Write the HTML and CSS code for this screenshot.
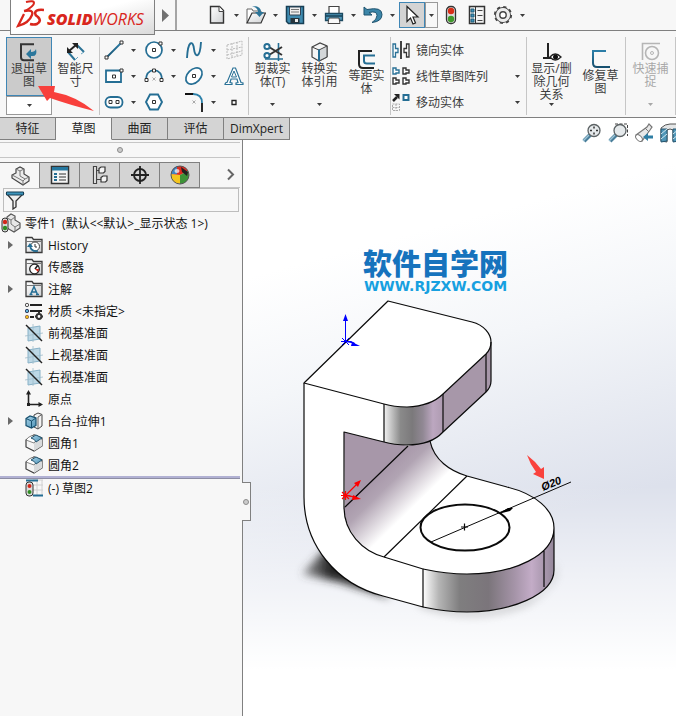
FILE: index.html
```html
<!DOCTYPE html>
<html lang="zh-CN">
<head>
<meta charset="utf-8">
<title>SOLIDWORKS</title>
<link rel="stylesheet" href="styles.css">
</head>
<body>
<svg class="defs" aria-hidden="true">
  <defs>
    <linearGradient id="steel" x1="0" y1="0" x2="0" y2="1"><stop offset="0" stop-color="#2b7ea8"/><stop offset="1" stop-color="#17506f"/></linearGradient>
    <linearGradient id="glass" x1="0" y1="0" x2="1" y2="1"><stop offset="0" stop-color="#a9d3e8"/><stop offset="1" stop-color="#4d93b7"/></linearGradient>
    <linearGradient id="paper" x1="0" y1="0" x2="1" y2="1"><stop offset="0" stop-color="#fff"/><stop offset="1" stop-color="#cfd1d3"/></linearGradient>
    <symbol id="caret" viewBox="0 0 5 3"><path d="M0 0h5L2.500 3z" fill="currentColor"/></symbol>
    <symbol id="expand" viewBox="0 0 5 8"><path d="M0 0l5 4-5 4z" fill="#6a6a6a"/></symbol>
    <symbol id="folder" viewBox="0 0 18 18"><path d="M1 16.500V1.500h6l1.500 2H17v13z" fill="url(#paper)" stroke="#3b3b3b" stroke-width="1.300"/><path d="M1 5.500h16" stroke="#777"/></symbol>
    <symbol id="plane" viewBox="0 0 18 18"><path d="M3 4l12-2v13L3 17z" fill="#bcd7e5" stroke="#88b2c8"/><path d="M8 0v18M0 12l18-3" stroke="#9fbccb" stroke-width=".8"/><path d="M1 1l16 16" stroke="#222" stroke-width="1.500"/></symbol>
    <symbol id="fillet" viewBox="0 0 18 18"><path d="M1 6l8-5 8 3v8l-8 5-8-4z" fill="#f4f4f4" stroke="#3f3f3f" stroke-width="1.200"/><path d="M9 8.500V17l8-5V5.500z" fill="#d8dadb"/><path d="M1 6Q3 3 6 2l4-1 7 3q-4 0-6 2.500L9 9z" fill="#fff" stroke="#555" stroke-width=".7"/><path d="M6 4l5-3 6 3-6 4q-1-3-5-4z" fill="url(#glass)" stroke="#24556f"/></symbol>
    <symbol id="lens" viewBox="0 0 20 20"><path d="M8 12l-6 6" stroke="#4a7f9b" stroke-width="4"/><path d="M7 12l-6 6" stroke="#9fc5d7" stroke-width="1.500"/><circle cx="12" cy="7.500" r="6" fill="#e5e9eb" stroke="#5c6264" stroke-width="1.300"/></symbol>
  </defs>
</svg>

<header class="topbar">
  <div class="brand">
    <svg class="ds" viewBox="0 0 28 28" fill="none" stroke="#d9261c"><path d="M10 2q8-2 8 1 0 3-9 8" stroke-width="2"/><path d="M8 11q10-2 8 4-3 8-14 11l6-12" stroke-width="2.300"/><path d="M28 10q-8-1-9 3 0 2 3 4 4 4-1 7-3 1-7 0" stroke-width="2.600"/></svg>
    <span class="wordmark"><b>SOLID</b>WORKS</span>
  </div>
  <button class="menu-toggle" aria-label="菜单"><svg width="7" height="13" viewBox="0 0 7 13"><path d="M0 0l7 6.500L0 13z" fill="#717171"/></svg></button>
  <div class="quick">
    <button class="tool" aria-label="新建"><svg viewBox="0 0 20 20"><path d="M3.500 1.500h9l4 4V18h-13z" fill="url(#paper)" stroke="#333" stroke-width="1.400"/><path d="M12 1.500v5h4.500" fill="#fff" stroke="#444"/></svg></button>
    <button class="drop" aria-label="新建选项"><svg><use href="#caret"/></svg></button>
    <button class="tool" aria-label="打开"><svg viewBox="0 0 20 20"><path d="M1 18V4h5l1 2h8v5" fill="#fff" stroke="#666"/><path d="M1 18L6 8h13.500L15 18z" fill="url(#paper)" stroke="#333" stroke-width="1.200"/><path d="M6 1q9 0 9 6h3l-4.500 5L9 7h3q0-4-6-6z" fill="#2d7598"/></svg></button>
    <button class="drop" aria-label="打开选项"><svg><use href="#caret"/></svg></button>
    <button class="tool" aria-label="保存"><svg viewBox="0 0 20 20"><path d="M1.500 1.500h17v17h-15l-2-2z" fill="#3f8bb0" stroke="#173f55" stroke-width="1.500"/><path d="M4.500 2h11v8h-11z" fill="#eee" stroke="#345"/><path d="M6 4.500h8M6 7h8" stroke="#777"/><path d="M5.500 13h9v5h-9z" fill="#26343c"/><path d="M10 14h3v3h-3z" fill="#eee"/></svg></button>
    <button class="drop" aria-label="保存选项"><svg><use href="#caret"/></svg></button>
    <button class="tool" aria-label="打印"><svg viewBox="0 0 20 20"><path d="M5 9V1.500h10V9" fill="#fff" stroke="#444" stroke-width="1.200"/><path d="M1.500 8.500h17v7h-17z" fill="#4d96b9" stroke="#1c4a61" stroke-width="1.300"/><path d="M2 11h16" stroke="#173f55" stroke-width="1.500"/><path d="M5 13h10l1 5.500H4z" fill="#f8f8f8" stroke="#444"/></svg></button>
    <button class="drop" aria-label="打印选项"><svg><use href="#caret"/></svg></button>
    <button class="tool" aria-label="撤销"><svg viewBox="0 0 20 20"><path d="M1 2v8h8L6 7.500q8-2 8 3 0 4-5 7 10-1 10-8 0-8-15-5z" fill="#3c86a9" stroke="#1d526e"/></svg></button>
    <button class="drop" aria-label="撤销选项"><svg><use href="#caret"/></svg></button>
    <button class="tool tool-on" aria-label="选择"><svg viewBox="0 0 20 20"><path d="M5 1.500v15l3.500-3.500 2.500 6 2.500-1-2.500-6h5z" fill="#fff" stroke="#222" stroke-width="1.200"/></svg></button>
    <button class="drop drop-on" aria-label="选择选项"><svg><use href="#caret"/></svg></button>
    <button class="tool" aria-label="重建模型"><svg viewBox="0 0 20 20"><rect x="5.500" y="1.500" width="9" height="17" rx="4" fill="#ddd" stroke="#333" stroke-width="1.300"/><circle cx="10" cy="6" r="3.200" fill="#d82e18"/><circle cx="10" cy="14" r="3.200" fill="#3f9a2b"/></svg></button>
    <button class="tool" aria-label="文件属性"><svg viewBox="0 0 20 20"><path d="M2.500 1.500h15v17h-15z" fill="#f3f3f3" stroke="#333" stroke-width="1.500"/><path d="M8.500 2v16" stroke="#333"/><path d="M4 4h3v3H4zM4 9h3v3H4zM4 14h3v3H4z" fill="#3e93ba" stroke="#215a76"/><path d="M10.500 5.500h5M10.500 10.500h5M10.500 15.500h5" stroke="#444"/></svg></button>
    <button class="tool" aria-label="选项"><svg viewBox="0 0 20 20"><circle cx="10" cy="10" r="7.300" fill="#ececec" stroke="#444" stroke-width="1.300"/><circle cx="10" cy="10" r="8.200" fill="none" stroke="#444" stroke-width="1.800" stroke-dasharray="3.200 3.240"/><circle cx="10" cy="10" r="7" fill="#ececec"/><circle cx="10" cy="10" r="3.200" fill="#fff" stroke="#444" stroke-width="1.400"/></svg></button>
    <button class="drop" aria-label="选项列表"><svg><use href="#caret"/></svg></button>
  </div>
</header>

<section class="ribbon" aria-label="草图工具">
  <div class="group">
    <div class="split">
      <button class="big big-on"><svg viewBox="0 0 20 20"><path d="M15 2.200H2v13q0 3 3 3h10" fill="none" stroke="#333" stroke-width="2"/><path d="M7 12l5-5v3q4 0 5-3 2 8-5 7v3z" fill="#2b779c"/></svg><span>退出草<br>图</span></button>
      <button class="split-drop" aria-label="退出草图选项"><svg class="caret"><use href="#caret"/></svg></button>
    </div>
    <button class="big"><svg viewBox="0 0 20 20"><path d="M2 10l7 8M10 2l8 8" stroke="#2a7195" stroke-width="2"/><path d="M3 9L10 3" stroke="#222" stroke-width="2"/><path d="M1 5v6h6zM6 1h6v6z" fill="#222"/><path d="M9 18l3-3M15 12l3-2" stroke="#6ba5c0"/></svg><span>智能尺<br>寸</span><svg class="caret"><use href="#caret"/></svg></button>
  </div>
  <div class="sketch-grid">
    <div class="cell"><button class="tool" aria-label="直线"><svg viewBox="0 0 20 20"><path d="M2.500 17.500L17.500 2.500" stroke="url(#steel)" stroke-width="1.800"/><path d="M1 16h3v3H1zM16 1h3v3h-3z" fill="#fff" stroke="#333"/></svg></button><button class="drop" aria-label="直线选项"><svg><use href="#caret"/></svg></button></div>
    <div class="cell"><button class="tool" aria-label="圆"><svg viewBox="0 0 20 20"><circle cx="10" cy="10" r="8" fill="#fff" stroke="#256e94" stroke-width="1.700"/><path d="M8.500 8.500h3v3h-3zM15 2h3v3h-3z" fill="#fff" stroke="#333"/></svg></button><button class="drop" aria-label="圆选项"><svg><use href="#caret"/></svg></button></div>
    <div class="cell"><button class="tool" aria-label="样条曲线"><svg viewBox="0 0 20 20"><path d="M3 18C4 0 9 0 10 9s6 10 7-7" fill="none" stroke="#256e94" stroke-width="1.900"/></svg></button><button class="drop" aria-label="样条曲线选项"><svg><use href="#caret"/></svg></button></div>
    <button class="tool" disabled aria-label="曲面上的样条"><svg viewBox="0 0 20 20"><path d="M3 5l15-4v14L3 19zM8 3v14M13 2v14M3 10l15-3M3 15l15-4" fill="none" stroke="#bbb" stroke-dasharray="2 1"/></svg></button>
    <div class="cell"><button class="tool" aria-label="矩形"><svg viewBox="0 0 20 20"><path d="M2 4.500h15V16H2z" fill="#fff" stroke="#256e94" stroke-width="1.800"/><path d="M8.500 9h3v3h-3zM16 3h3v3h-3z" fill="#fff" stroke="#333"/></svg></button><button class="drop" aria-label="矩形选项"><svg><use href="#caret"/></svg></button></div>
    <div class="cell"><button class="tool" aria-label="圆弧"><svg viewBox="0 0 20 20"><path d="M2 14q0-9 8-10 8 1 8 10" fill="none" stroke="#256e94" stroke-width="1.700"/><path d="M1 12.500h3v3H1zM16 12.500h3v3h-3zM8.500 3h3v3h-3z" fill="#fff" stroke="#333"/><path d="M8.500 11.500l3 3m0-3l-3 3" stroke="#aaa"/></svg></button><button class="drop" aria-label="圆弧选项"><svg><use href="#caret"/></svg></button></div>
    <div class="cell"><button class="tool" aria-label="椭圆"><svg viewBox="0 0 20 20"><ellipse cx="10" cy="10" rx="9.500" ry="6.500" transform="rotate(-45 10 10)" fill="#fff" stroke="#256e94" stroke-width="1.700"/><path d="M8.500 8.500h3v3h-3z" fill="#fff" stroke="#333"/></svg></button><button class="drop" aria-label="椭圆选项"><svg><use href="#caret"/></svg></button></div>
    <button class="tool" aria-label="文字"><svg viewBox="0 0 20 20"><path d="M1 18l1-1.500h1L9 2h2.500L17 16.500l2 .5v1.500h-7V17l2-.5-1-3.500H7l-1 3.500 2 .5v1.500H1z" fill="#fff" stroke="#2b7297" stroke-width="1.200"/><path d="M7.500 11h5L10 5z" fill="#f7f7f7" stroke="#2b7297"/></svg></button>
    <div class="cell"><button class="tool" aria-label="槽口"><svg viewBox="0 0 20 20"><rect x="1.500" y="5" width="17" height="10.500" rx="5" fill="#fff" stroke="#256e94" stroke-width="1.800"/><path d="M5 8.500h3v3H5zM12 8.500h3v3h-3z" fill="#fff" stroke="#333"/></svg></button><button class="drop" aria-label="槽口选项"><svg><use href="#caret"/></svg></button></div>
    <div class="cell"><button class="tool" aria-label="多边形"><svg viewBox="0 0 20 20"><path d="M6 2.500h8l4 7.500-4 7.500H6L2 10z" fill="#fff" stroke="#256e94" stroke-width="1.900"/><path d="M8.500 8.500h3v3h-3z" fill="#fff" stroke="#333"/></svg></button></div>
    <div class="cell"><button class="tool" aria-label="圆角"><svg viewBox="0 0 20 20"><path d="M1 2h9M18 11v9" stroke="#111" stroke-width="1.800"/><path d="M9 2q9 0 9 9" fill="none" stroke="#2c80a9" stroke-width="1.800"/><path d="M8.500 8.500l3 3m0-3l-3 3" stroke="#aaa"/></svg></button><button class="drop" aria-label="圆角选项"><svg><use href="#caret"/></svg></button></div>
    <button class="tool" aria-label="点"><svg viewBox="0 0 20 20"><path d="M8 8.500h4v4H8z" fill="#fff" stroke="#222" stroke-width="1.300"/></svg></button>
  </div>
  <div class="group">
    <button class="big"><svg viewBox="0 0 20 20"><path d="M15.500 1v18M2 17h18" stroke="#256e94" stroke-width="1.600"/><path d="M6 5l13 8M6 13l13-8" stroke="#333" stroke-width="2"/><circle cx="4" cy="4.500" r="2.600" fill="#fff" stroke="#256e94" stroke-width="2"/><circle cx="4" cy="13.500" r="2.600" fill="#fff" stroke="#256e94" stroke-width="2"/></svg><span>剪裁实<br>体(T)</span><svg class="caret"><use href="#caret"/></svg></button>
    <button class="big"><svg viewBox="0 0 20 20"><path d="M2 5l8-4 7 3v11l-8 4-7-4z" fill="#f6f6f6" stroke="#444" stroke-width="1.200"/><path d="M9 8l8-4v11l-8 4z" fill="#d4d7d9" stroke="#444"/><path d="M2 5l7 3" stroke="#444"/><path d="M9 7.500V19" stroke="#256e94" stroke-width="2"/></svg><span>转换实<br>体引用</span><svg class="caret"><use href="#caret"/></svg></button>
    <button class="big big-mid"><svg viewBox="0 0 20 20"><path d="M15 2H2v13q0 4 4 4h11" fill="none" stroke="#222" stroke-width="2"/><path d="M18 6.500H7V12q0 2.500 3 2.500h8" fill="none" stroke="#256e94" stroke-width="2"/></svg><span>等距实<br>体</span></button>
  </div>
  <div class="list">
    <button class="row"><svg viewBox="0 0 20 20"><path d="M10 1v18" stroke="#222" stroke-width="1.700"/><path d="M2 4h2.500v4.500H7v4H4.500V17H2z" fill="#fff" stroke="#2b7297" stroke-width="1.300"/><path d="M18 4h-2.500v4.500H13v4h2.500V17H18z" fill="#fff" stroke="#333" stroke-width="1.300"/></svg><span>镜向实体</span></button>
    <button class="row"><svg viewBox="0 0 20 20"><path d="M2 2h3v2h3v3H5v1H2z" fill="#fff" stroke="#2b7297" stroke-width="1.400"/><path d="M12 2h3v2h3v3h-3v1h-3zM2 12h3v2h3v3H5v1H2zM12 12h3v2h3v3h-3v1h-3z" fill="#fff" stroke="#333" stroke-width="1.400"/></svg><span>线性草图阵列</span><svg class="caret"><use href="#caret"/></svg></button>
    <button class="row"><svg viewBox="0 0 20 20"><path d="M12.500 3h5v5h-5z" fill="#fff" stroke="#256e94" stroke-width="2"/><path d="M2 9l4-4" stroke="#222" stroke-width="2.500"/><path d="M3 2h5.500v5.500z" fill="#222"/><path d="M1.500 12h7v6.500h-7zM5 12v7M1.500 15.500h7" fill="none" stroke="#aaa" stroke-dasharray="2 1"/></svg><span>移动实体</span><svg class="caret"><use href="#caret"/></svg></button>
  </div>
  <div class="group">
    <button class="big"><svg viewBox="0 0 20 20"><path d="M6 1v15M1 16h8" stroke="#222" stroke-width="2"/><path d="M8 15q5-6 11 0-6 6-11 0z" fill="#fff" stroke="#222" stroke-width="1.300"/><circle cx="13.500" cy="15" r="2.500" fill="#111"/></svg><span>显示/删<br>除几何<br>关系</span><svg class="caret"><use href="#caret"/></svg></button>
    <button class="big big-mid"><svg viewBox="0 0 20 20"><path d="M15 2H2v12q0 4 4 4h13" fill="none" stroke="url(#steel)" stroke-width="2"/></svg><span>修复草<br>图</span></button>
  </div>
  <div class="group">
    <button class="big" disabled><svg viewBox="0 0 20 20"><path d="M1.500 18V1.500H19" fill="none" stroke="#b5b5b5" stroke-width="1.600"/><circle cx="11" cy="11" r="6.500" fill="none" stroke="#b5b5b5" stroke-width="1.600"/><circle cx="11" cy="11" r="1.500" fill="none" stroke="#b5b5b5"/></svg><span>快速捕<br>捉</span><svg class="caret"><use href="#caret"/></svg></button>
  </div>
  <svg class="pointer" viewBox="0 0 56 26" aria-hidden="true"><path d="M0 0L17 0 16 6Q38 10 56 25 32 19 12 12L9 15z" fill="#f8403c"/></svg>
</section>

<div class="tabbar">
  <nav class="tabs">
    <a href="#features">特征</a><a href="#sketch" class="current">草图</a><a href="#surfaces">曲面</a><a href="#evaluate">评估</a><a href="#dimxpert" class="wide">DimXpert</a>
  </nav>
  <div class="view-tools">
    <button aria-label="整屏显示全图"><svg viewBox="0 0 20 20"><use href="#lens"/><path d="M12 3.500v2M12 9.500v2M8 7.500h2M14 7.500h2" stroke="#333" stroke-width="1.500"/></svg></button>
    <button aria-label="局部放大"><svg viewBox="0 0 20 20"><path d="M7 1h12.500v12" fill="none" stroke="#444" stroke-dasharray="3 1.500"/><use href="#lens"/></svg></button>
    <button aria-label="上一视图"><svg viewBox="0 0 20 20"><path d="M2 12L13 4l2-3 3 3-2 3L8 18z" fill="#e8e8e8" stroke="#777" stroke-width="1.200"/><path d="M11 5l4 4" stroke="#777"/><ellipse cx="5" cy="15" rx="4" ry="2.500" transform="rotate(45 5 15)" fill="#fff" stroke="#777"/><path d="M9 14l5-4v2.500h5v3h-5V18z" fill="#2f7ea4"/></svg></button>
    <button aria-label="剖面视图"><svg viewBox="0 0 20 20"><path d="M1 5q4-4 9-4h9v17h-6V7q-3-2-6 0v12l-6-1z" fill="#e4e6e7" stroke="#555"/><path d="M1 6h6v12l-6 1zM13 6h6v12l-6 1z" fill="#5097b8" stroke="#24556f"/><path d="M1 11l6-5M1 16l6-5M13 11l6-5M13 16l6-5" stroke="#d4e8f1"/></svg></button>
  </div>
</div>

<main class="workspace">
  <aside class="panel">
    <div class="splitter"><i class="knob"></i></div>
    <div class="panel-tabs">
      <button class="current" aria-label="特征树"><svg viewBox="0 0 20 20"><path d="M2 9l4-2V3l4-2 4 2v5l5 3v4l-6 4L2 12z" fill="#ececec" stroke="#444" stroke-width="1.200"/><path d="M6 3l4 2v5l5 3 4-2M10 5l4-2M2 9l4 2 7 4v4M13 15l2-2" fill="none" stroke="#777"/></svg></button>
      <button aria-label="属性"><svg viewBox="0 0 20 20"><path d="M1.500 1.500h17v17h-17z" fill="#f5f5f5" stroke="#333" stroke-width="1.500"/><path d="M2 2h16v3.500H2z" fill="#2678a0"/><path d="M4 9h3M4 12h3M4 15h3" stroke="#256e94" stroke-width="2"/><path d="M9 9h7M9 12h7M9 15h7" stroke="#333" stroke-width="1.200"/></svg></button>
      <button aria-label="配置"><svg viewBox="0 0 20 20"><path d="M3.500 1.500h3v17h-3zM6.500 5.500h4M6.500 14.500h5" fill="#eee" stroke="#444" stroke-width="1.200"/><path d="M9 3.500L11 2h4v4.500L13.500 8H9zM11 12.500l2-1.500h4v4.500L15.500 17H11z" fill="#f5f5f5" stroke="#333" stroke-width="1.200"/></svg></button>
      <button aria-label="尺寸专家"><svg viewBox="0 0 20 20"><circle cx="10" cy="10" r="6" fill="none" stroke="#222" stroke-width="1.800"/><path d="M10 1v18M1 10h18" stroke="#222" stroke-width="1.800"/></svg></button>
      <button aria-label="外观"><svg viewBox="0 0 20 20"><path d="M10 10V1a9 9 0 0 1 8 5z" fill="#e12a20"/><path d="M1 9l9 1v9a9 9 0 0 1-9-10z" fill="#f4c51f"/><path d="M10 10l8-4a9 9 0 0 1-8 13z" fill="#3d9338"/><path d="M1 9a9 9 0 0 1 9-8v9z" fill="#d83124"/><path d="M1 9q1-6 6-8v8z" fill="#4384c1"/><path d="M11 2l7 5-1 4-5-4z" fill="#222"/><circle cx="10" cy="10" r="9" fill="none" stroke="#555"/><ellipse cx="7" cy="6" rx="2.500" ry="2" fill="#fff" opacity=".7"/></svg></button>
      <button class="more" aria-label="更多"><svg viewBox="0 0 20 20"><path d="M8 4.500l5 5-5 5" fill="none" stroke="#666" stroke-width="2"/></svg></button>
    </div>
    <label class="filter"><svg viewBox="0 0 20 20"><path d="M2 4l6 7v8l3-2v-6l7-7z" fill="#eee" stroke="#333" stroke-width="1.300"/><path d="M1.500 2h17v3h-17z" fill="#3c94bb" stroke="#173f55"/></svg><input type="text" aria-label="过滤特征树"></label>
    <div class="tree-root"><svg viewBox="0 0 20 20"><path d="M6 7V4l4-3 4 2v4l5 3v5l-6 4-7-4z" fill="#e7e7e7" stroke="#555" stroke-width="1.200"/><path d="M6 5l4 2 4-3M10 7v4l4 3 5-3M14 14v4" fill="none" stroke="#777"/><rect x="1" y="5" width="6" height="14" rx="3" fill="#ddd" stroke="#333"/><circle cx="4" cy="9" r="2.200" fill="#d3271a"/><circle cx="4" cy="15" r="2.200" fill="#2f8d23"/></svg><span>零件1&nbsp; (默认&lt;&lt;默认&gt;_显示状态 1&gt;)</span></div>
    <ul class="tree">
      <li><svg class="twist"><use href="#expand"/></svg><svg class="ico" viewBox="0 0 18 18"><use href="#folder"/><circle cx="10" cy="10.500" r="4.500" fill="#fff" stroke="#444"/><path d="M10 8v3h2" fill="none" stroke="#333"/><path d="M13 15q-7 1-8-5" fill="none" stroke="#256e94" stroke-width="1.600"/><path d="M2 11l3-4 3 4z" fill="#256e94"/></svg><span>History</span></li>
      <li><svg class="ico" viewBox="0 0 18 18"><use href="#folder"/><circle cx="9.500" cy="11" r="4.800" fill="#fff" stroke="#222" stroke-width="1.300"/><path d="M10 11l3-4" stroke="#222" stroke-width="1.500"/><path d="M10 11h4l-1 3z" fill="#d3271a"/></svg><span>传感器</span></li>
      <li><svg class="twist"><use href="#expand"/></svg><svg class="ico" viewBox="0 0 18 18"><use href="#folder"/><path d="M5.500 14.500L9 6.500l3.500 8M7 12h4M4.500 14.500h3M11 14.500h3" fill="none" stroke="#256e94" stroke-width="1.500"/></svg><span>注解</span></li>
      <li><svg class="ico" viewBox="0 0 18 18"><path d="M5 3h12M5 9h12M5 15h4" stroke="#222" stroke-width="1.800"/><circle cx="2" cy="3" r="1.700" fill="#eee" stroke="#555"/><circle cx="2" cy="9" r="1.700" fill="#5cb1d8" stroke="#346"/><circle cx="2" cy="15" r="1.700" fill="#f4bd16" stroke="#975"/><circle cx="14" cy="14.500" r="2.400" fill="#fff" stroke="#333" stroke-width="2"/><path d="M14 10v2M14 17v1M10 14.500h2M16 14.500h2" stroke="#333" stroke-width="2"/></svg><span>材质 &lt;未指定&gt;</span></li>
      <li><svg class="ico" viewBox="0 0 18 18"><use href="#plane"/></svg><span>前视基准面</span></li>
      <li><svg class="ico" viewBox="0 0 18 18"><use href="#plane"/></svg><span>上视基准面</span></li>
      <li><svg class="ico" viewBox="0 0 18 18"><use href="#plane"/></svg><span>右视基准面</span></li>
      <li><svg class="ico" viewBox="0 0 18 18"><path d="M3.500 2v12.500H16" fill="none" stroke="#222" stroke-width="1.600"/><path d="M3.500 0L6 4.500H1zM18 14.500L13.500 12v5z" fill="#222"/><path d="M2 13h3v3H2z" fill="#222"/></svg><span>原点</span></li>
      <li><svg class="twist"><use href="#expand"/></svg><svg class="ico" viewBox="0 0 18 18"><path d="M9 3l4-2 4 1.500V14l-4 3-4-2z" fill="#f3f3f3" stroke="#444"/><path d="M13 5v12M13 5l4-2.500" stroke="#666"/><path d="M1 6.500L5 4l6 2v7.500L6.500 16 1 13.500z" fill="url(#glass)" stroke="#17506f" stroke-width="1.200"/><path d="M1 6.500L6.500 9 11 6M6.500 9v7" fill="none" stroke="#17506f"/></svg><span>凸台-拉伸1</span></li>
      <li><svg class="ico" viewBox="0 0 18 18"><use href="#fillet"/></svg><span>圆角1</span></li>
      <li><svg class="ico" viewBox="0 0 18 18"><use href="#fillet"/></svg><span>圆角2</span></li>
      <li class="rollback" role="separator"></li>
      <li><svg class="ico" viewBox="0 0 18 18"><path d="M8 1h10M8 6h10M8 11h10M12 1v15M17 1v15" stroke="#d0d0d0"/><path d="M1 1.500h12M8 16.500h10" stroke="#256e94" stroke-width="1.800"/><rect x="1" y="3" width="7" height="14" rx="3" fill="#ddd" stroke="#333"/><circle cx="4.500" cy="7" r="2" fill="#d3271a"/><circle cx="4.500" cy="13" r="2" fill="#2f8d23"/></svg><span>(-) 草图2</span></li>
    </ul>
  </aside>

  <section class="viewport" aria-label="图形区域">
    <button class="handle" aria-label="折叠面板"><i class="knob"></i></button>
    <svg class="model" viewBox="243 140 433 576">
      <defs>
        <linearGradient id="frontTop" x1="0" x2="1"><stop offset="0" stop-color="#f2f2f2"/><stop offset=".28" stop-color="#8a8a8a"/><stop offset=".48" stop-color="#7b797b"/><stop offset=".66" stop-color="#918894"/><stop offset=".83" stop-color="#bca7c0"/><stop offset="1" stop-color="#ae9bb1"/></linearGradient>
        <linearGradient id="frontLow" x1="0" x2="1"><stop offset="0" stop-color="#fff"/><stop offset=".12" stop-color="#b5b5b5"/><stop offset=".28" stop-color="#7f7e7f"/><stop offset=".5" stop-color="#7b757b"/><stop offset=".7" stop-color="#a594a8"/><stop offset=".83" stop-color="#c3acc7"/><stop offset="1" stop-color="#94879a"/></linearGradient>
        <linearGradient id="bend" gradientUnits="userSpaceOnUse" x1="376" y1="476" x2="418" y2="519"><stop offset="0" stop-color="#a797a9"/><stop offset=".25" stop-color="#b1a4b3"/><stop offset=".8" stop-color="#fff"/></linearGradient>
        <filter id="soft" x="-30%" y="-30%" width="160%" height="160%"><feGaussianBlur stdDeviation="4"/></filter>
        <linearGradient id="shade" gradientUnits="userSpaceOnUse" x1="300" y1="570" x2="360" y2="575"><stop offset="0" stop-color="#555" stop-opacity=".5"/><stop offset=".5" stop-color="#222"/></linearGradient>
      </defs>
      <path d="M302 574L324 550 350 560 390 598 340 582z" fill="url(#shade)" filter="url(#soft)"/>
      <path d="M420 600q60 25 115-4 22-12 21-42v20q-4 15-28 30-50 22-108 2z" fill="#777" opacity=".5" filter="url(#soft)"/>
      <path d="M344 432L383 442 430 441C434 460 450 471 467 476L507 487C536 494 554 510 554 528V570C554 595 510 612 467 612 450 612 437 610 423 607L383 596C336 584 304 545 304 497V383L344 400z" fill="#fff"/>
      <path d="M344 432L408 446 345 507z" fill="#a797a9"/>
      <path d="M408 446L430 440C434 460 450 471 467 476L384 557C362 551 345 530 344 507z" fill="url(#bend)"/>
      <path d="M423 569C437 572 450 574 467 574 515 574 554 555 554 527V570C554 595 510 612 467 612 450 612 437 610 423 607z" fill="url(#frontLow)"/>
      <path d="M304 383V497C304 545 336 584 383 596L423 607V569L384 557C362 551 344 532 344 507V432L384 442V404z" fill="#fff"/>
      <path d="M443 394L486 354Q491 349 491 342V381Q491 387 486 392L443 432z" fill="#a797a9"/>
      <path d="M384 404Q394 407 407 407 431 406 443 394V432Q431 445 407 445 394 445 384 442z" fill="url(#frontTop)"/>
      <path d="M388 301L472 322C484 325 491 334 491 342Q491 349 486 354L443 394Q431 406 407 407 394 407 384 404L304 383z" fill="#fff"/>
      <g fill="none" stroke="#0a0a0a" stroke-width="1.200" stroke-linejoin="round">
        <path d="M388 301L472 322C484 325 491 334 491 342Q491 349 486 354L443 394Q431 406 407 407 394 407 384 404L304 383z"/>
        <path d="M491 342V381Q491 387 486 392L443 432Q431 445 407 445 394 445 384 442L344 432V507C344 532 362 551 384 557L423 569V607L383 596C336 584 304 545 304 497V383"/>
        <path d="M384 404V442M443 394V432M486 354V392M408 446L345 507M430 441C434 460 450 471 467 476L384 557M467 476L507 487C536 494 554 510 554 528 554 555 515 574 467 574 450 574 437 572 423 569M554 528V570C554 595 510 612 467 612 450 612 437 610 423 607M544 551V587"/>
        <ellipse cx="465" cy="527.500" rx="44.500" ry="23" stroke-width="2"/>
        <path d="M431 542L571 482" stroke-width="1"/><path d="M461 527h7M464.500 523.500v7"/>
      </g>
      <path d="M498 514l10-6 5 0-3 3z" fill="#000"/>
      <text class="dim" x="543" y="491" transform="rotate(-22 543 491)">Ø20</text>
      <g stroke="#00f" fill="#00f"><path d="M345.500 341V319M341 341.500h10l4 2M342 338l7 7M342 345l7-7"/><path d="M345.500 314l2.500 7h-5zM360 346l-8-4-1 4z" stroke="none"/></g>
      <g stroke="#f00" fill="#f00"><path d="M345.500 495.500l12-12M341 495.500h8l6 2M342 492l7 7M342 499l7-7M345.500 491v9" stroke-width="1.200"/><path d="M361 480l-3 7-4-4zM361 499l-8-4-1 5z" stroke="none"/></g>
      <path d="M527 455Q535 461 541 469L544 467V479L533 474 536 472Q530 464 527 455z" fill="#f9423d"/>
    </svg>
    <div class="watermark"><strong>软件自学网</strong><span>WWW.RJZXW.COM</span></div>
  </section>
</main>
</body>
</html>
```
FILE: styles.css
```css
* { box-sizing: border-box; }

:root {
  --chrome: #f7f7f7;
  --line: #808080;
  --soft-line: #c6c6c6;
  --inactive: #d4d4d4;
}

body {
  margin: 0;
  min-height: 100vh;
  display: flex;
  flex-direction: column;
  overflow-x: hidden;
  background: #fff;
  color: #111;
  font: 12px/13px "Open Sans", "Noto Sans CJK SC", sans-serif;
}

button {
  margin: 0;
  padding: 0;
  border: 0;
  background: none;
  color: #3c3c3c;
  font: inherit;
}

button:disabled { color: #a8a8a8; }
svg { display: block; flex: none; }
.defs { position: absolute; width: 0; height: 0; }

.topbar {
  display: flex;
  height: 31px;
  background: var(--chrome);
  border-bottom: 1px solid var(--line);
}

.brand {
  position: relative;
  z-index: 1;
  display: flex;
  align-items: center;
  gap: 3px;
  width: 145px;
  height: 35px;
  margin-left: 10px;
  padding: 0 0 6px 5px;
  border: 1px solid var(--line);
  border-top: 0;
  background: linear-gradient(165deg, #fff 45%, #dadada);
  color: #d9261c;
}

.ds { width: 28px; height: 28px; }

.wordmark {
  padding-top: 10px;
  font-size: 16px;
  line-height: 20px;
  font-style: italic;
}

.wordmark b { font-weight: 800; }

.menu-toggle {
  display: grid;
  place-items: center;
  width: 22px;
  border-right: 2px solid #a5a5a5;
}

.quick {
  display: flex;
  align-items: center;
  padding-left: 27px;
}

.tool {
  display: grid;
  place-items: center;
  width: 26px;
  height: 26px;
}

.tool svg { width: 20px; height: 20px; }
.quick .drop { width: 13px; height: 26px; }
.drop { display: grid; place-items: center; }
.drop svg, .caret { width: 5px; height: 3px; }

.quick .tool-on {
  border: 1px solid #3f86b5;
  background: var(--inactive);
}

.quick .drop-on { border: 1px solid #999; }

.ribbon {
  position: relative;
  display: flex;
  height: 87px;
  padding: 6px 0 2px 6px;
  background: var(--chrome);
  border-bottom: 1px solid var(--line);
}

.group { display: flex; }
.group, .sketch-grid, .list { border-right: 1px solid var(--soft-line); }

.big {
  display: flex;
  flex-direction: column;
  align-items: center;
  width: 47px;
  padding: 5px 0 9px;
  text-align: center;
}

.big > svg:first-child { width: 20px; height: 20px; }
.big > .caret { margin-top: auto; }
.big-mid { padding-top: 12px; }

.split { display: flex; flex-direction: column; width: 46px; }

.big-on {
  width: 46px;
  height: 59px;
  border: 1px solid #3f86b5;
  background: #cbcbcb;
  padding-top: 4px;
}

.split-drop {
  display: grid;
  place-items: center;
  flex: 1;
  border: 1px solid #999;
  background: #fff;
}

.sketch-grid {
  display: grid;
  grid-template-columns: 40px 40px 40px 28px;
  grid-template-rows: repeat(3, 26px);
}

.cell { display: flex; }
.cell .drop { width: 13px; }
.sketch-grid .tool { width: 27px; }

.list {
  flex: 0 1 138px;
  display: flex;
  flex-direction: column;
}

.row {
  display: flex;
  align-items: center;
  gap: 5px;
  height: 26px;
  padding-right: 6px;
}

.row > svg:first-child { width: 20px; height: 20px; }
.row .caret { margin-left: auto; }

.group:nth-last-of-type(2) .big, .group:nth-last-of-type(1) .big { width: 49px; }

.pointer {
  position: absolute;
  left: 38px;
  top: 55px;
  width: 56px;
  height: 26px;
}

.tabbar {
  display: flex;
  justify-content: space-between;
  height: 22px;
}

.tabs { display: flex; }

.tabs a {
  width: 56px;
  border: solid var(--line);
  border-width: 0 1px 1px 0;
  background: var(--inactive);
  color: #222;
  line-height: 22px;
  text-align: center;
  text-decoration: none;
}

.tabs .wide { width: 66px; }
.tabs .current { background: var(--chrome); border-bottom-color: var(--chrome); }

.view-tools {
  position: relative;
  z-index: 1;
  display: flex;
  gap: 6px;
  width: 94px;
  padding-top: 5px;
  overflow-x: clip;
}

.view-tools svg { width: 20px; height: 20px; }

.workspace { display: flex; flex: 1; }

.panel {
  flex: none;
  width: 243px;
  background: var(--chrome);
  border-right: 1px solid var(--line);
}

.splitter {
  display: grid;
  place-items: center;
  height: 16px;
  margin: 2px 2px 4px 0;
  border: solid var(--soft-line);
  border-width: 1px 0;
}

.knob {
  display: block;
  width: 6px;
  height: 6px;
  border: 1px solid #8c8c8c;
  border-radius: 50%;
  background: #ccc;
}

.panel-tabs {
  display: flex;
  height: 26px;
  margin-right: 2px;
}

.panel-tabs button {
  display: grid;
  place-items: center;
  width: 40px;
  border: 1px solid var(--line);
  border-left: 0;
  background: var(--inactive);
}

.panel-tabs svg { width: 20px; height: 20px; }

.panel-tabs .current {
  background: none;
  border-bottom: 0;
}

.panel-tabs .more {
  flex: 1;
  justify-content: end;
  border: 0;
  border-bottom: 1px solid var(--soft-line);
  background: none;
}

.filter {
  display: flex;
  align-items: center;
  height: 24px;
  margin: 0 3px;
  padding-left: 1px;
  border: 1px solid #bdbdbd;
}

.filter svg { width: 20px; height: 20px; }

.filter input {
  flex: 1;
  min-width: 0;
  border: 0;
  background: none;
  outline: 0;
}

.tree-root, .tree li {
  display: flex;
  align-items: center;
  height: 22px;
  white-space: nowrap;
}

.tree-root { gap: 4px; padding-left: 1px; }
.tree-root svg { width: 20px; height: 20px; }

.tree {
  margin: 0;
  padding: 0;
  list-style: none;
}

.tree li { position: relative; padding-left: 25px; gap: 5px; }
.ico { width: 18px; height: 18px; }

.twist {
  position: absolute;
  left: 8px;
  width: 5px;
  height: 8px;
}

.tree .rollback {
  height: 3px;
  margin: 0 2px -2px 0;
  background: #b1b1d3;
  border-bottom: 1px solid #8e8ea5;
}

.viewport {
  position: relative;
  flex: 1;
  min-width: 0;
  background:
    linear-gradient(180deg, transparent 60%, rgb(255 255 255 / 55%) 76%, #fff 92%),
    linear-gradient(165deg, #fff 20%, #f4f6f9 38%, #dde1ec 66%);
}

.model {
  position: absolute;
  inset: 0;
  width: 100%;
  height: 100%;
}

.dim { font: italic bold 11px "Liberation Sans", sans-serif; }

.handle {
  position: absolute;
  z-index: 1;
  left: -1px;
  top: 342px;
  display: grid;
  place-items: center;
  width: 9px;
  height: 39px;
  border: 1px solid var(--line);
  border-left: 0;
  background: var(--chrome);
}

.watermark {
  position: absolute;
  top: 108px;
  left: 0;
  right: 0;
  margin-left: -48px;
  display: flex;
  flex-direction: column;
  align-items: center;
  color: #1673bd;
}

.watermark strong {
  font-size: 29px;
  line-height: 32px;
  font-weight: 900;
}

.watermark span {
  color: #17a0e0;
  font: bold 14px/12px "DejaVu Sans", sans-serif;
}
```
